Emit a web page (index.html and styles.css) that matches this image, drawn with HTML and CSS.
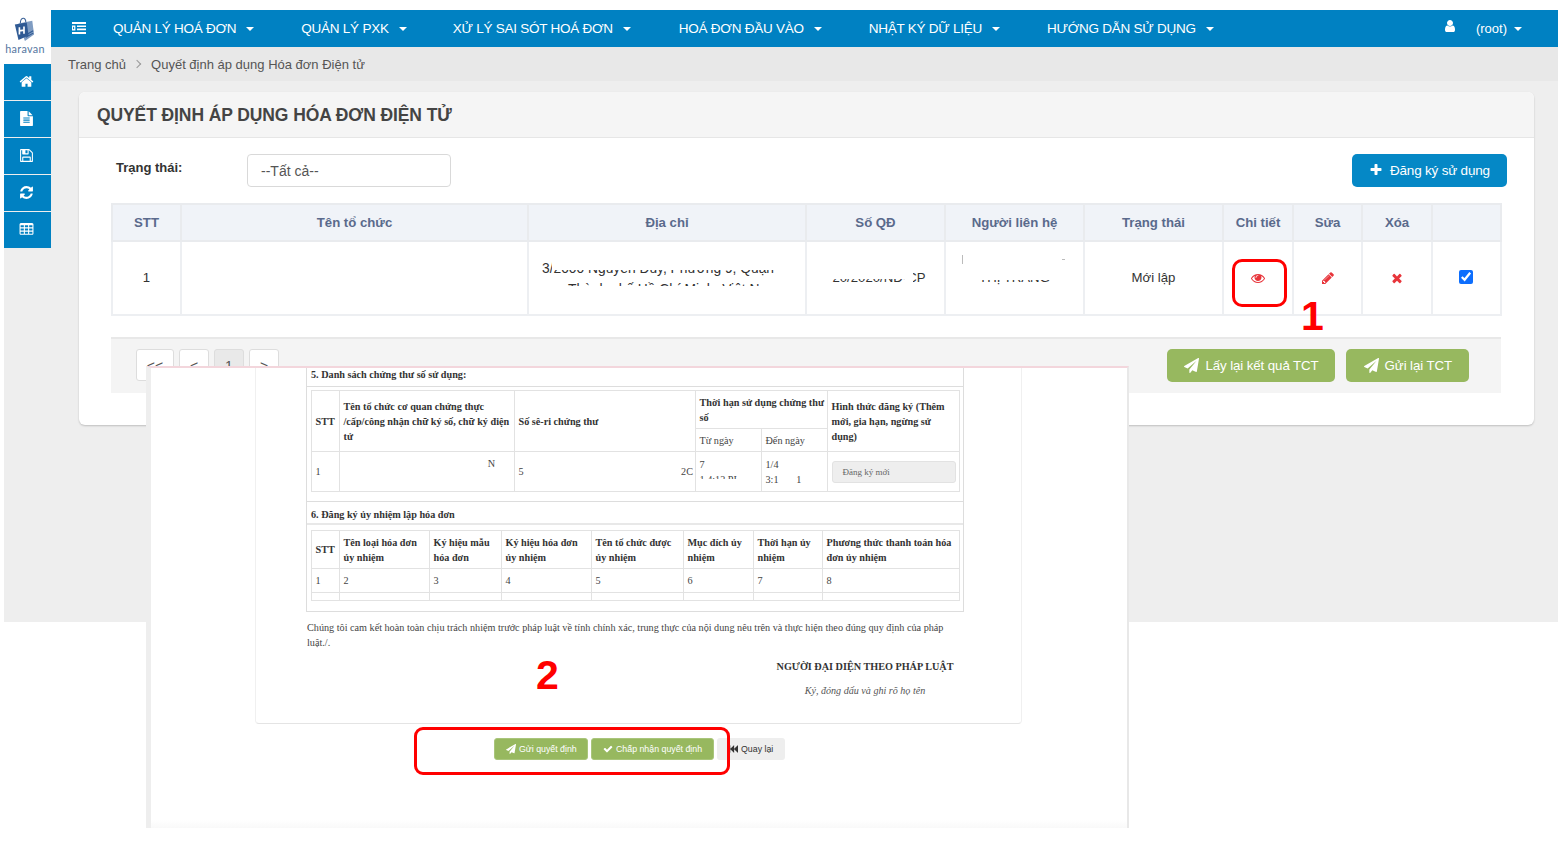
FILE: index.html
```html
<!DOCTYPE html>
<html lang="vi">
<head>
<meta charset="utf-8">
<title>Quyết định áp dụng Hóa đơn Điện tử</title>
<link rel="stylesheet" href="styles.css">
</head>
<body>
<svg class="sprite" xmlns="http://www.w3.org/2000/svg">
  <symbol id="i-home" viewBox="0 0 1792 1792"><path d="M1472 992v480q0 26-19 45t-45 19h-384v-384h-256v384h-384q-26 0-45-19t-19-45v-480q0-1 .5-3t.5-3l575-474 575 474q1 2 1 6zm223-69l-62 74q-8 9-21 11h-3q-13 0-21-7l-692-577-692 577q-12 8-24 7-13-2-21-11l-62-74q-8-10-7-23.5t11-21.5l719-599q32-26 76-26t76 26l244 204v-195q0-14 9-23t23-9h192q14 0 23 9t9 23v408l219 182q10 8 11 21.5t-7 23.5z"/></symbol>
  <symbol id="i-file" viewBox="0 0 1792 1792"><path d="M1596 476q14 14 28 36h-472v-472q22 14 36 28zm-476 164h544v1056q0 40-28 68t-68 28h-1344q-40 0-68-28t-28-68v-1600q0-40 28-68t68-28h800v544q0 40 28 68t68 28zm160 736v-64q0-14-9-23t-23-9h-704q-14 0-23 9t-9 23v64q0 14 9 23t23 9h704q14 0 23-9t9-23zm0-256v-64q0-14-9-23t-23-9h-704q-14 0-23 9t-9 23v64q0 14 9 23t23 9h704q14 0 23-9t9-23zm0-256v-64q0-14-9-23t-23-9h-704q-14 0-23 9t-9 23v64q0 14 9 23t23 9h704q14 0 23-9t9-23z"/></symbol>
  <symbol id="i-save" viewBox="0 0 1792 1792"><path d="M512 1536h768v-384h-768v384zm896 0h128v-896q0-14-10-38.5t-20-34.5l-281-281q-10-10-34-20t-39-10v416q0 40-28 68t-68 28h-576q-40 0-68-28t-28-68v-416h-128v1280h128v-416q0-40 28-68t68-28h832q40 0 68 28t28 68v416zm-384-928v-320q0-13-9.5-22.5t-22.5-9.5h-192q-13 0-22.5 9.5t-9.5 22.5v320q0 13 9.5 22.5t22.5 9.5h192q13 0 22.5-9.5t9.5-22.5zm640 32v928q0 40-28 68t-68 28h-1344q-40 0-68-28t-28-68v-1344q0-40 28-68t68-28h928q40 0 88 20t76 48l280 280q28 28 48 76t20 88z"/></symbol>
  <symbol id="i-refresh" viewBox="0 0 1792 1792"><path d="M1639 1056q0 5-1 7-64 268-268 434.5t-478 166.5q-146 0-282.5-55t-243.5-157l-129 129q-19 19-45 19t-45-19-19-45v-448q0-26 19-45t45-19h448q26 0 45 19t19 45-19 45l-137 137q71 66 161 102t187 36q134 0 250-65t186-179q11-17 53-117 8-23 30-23h192q13 0 22.5 9.5t9.5 22.5zm25-800v448q0 26-19 45t-45 19h-448q-26 0-45-19t-19-45 19-45l138-138q-148-137-349-137-134 0-250 65t-186 179q-11 17-53 117-8 23-30 23h-199q-13 0-22.5-9.5t-9.5-22.5v-7q65-268 270-434.5t480-166.5q146 0 284 55.5t245 156.5l130-129q19-19 45-19t45 19 19 45z"/></symbol>
  <symbol id="i-table" viewBox="0 0 1792 1792"><path d="M576 1376v-192q0-14-9-23t-23-9h-320q-14 0-23 9t-9 23v192q0 14 9 23t23 9h320q14 0 23-9t9-23zm0-384v-192q0-14-9-23t-23-9h-320q-14 0-23 9t-9 23v192q0 14 9 23t23 9h320q14 0 23-9t9-23zm512 384v-192q0-14-9-23t-23-9h-320q-14 0-23 9t-9 23v192q0 14 9 23t23 9h320q14 0 23-9t9-23zm-512-768v-192q0-14-9-23t-23-9h-320q-14 0-23 9t-9 23v192q0 14 9 23t23 9h320q14 0 23-9t9-23zm512 384v-192q0-14-9-23t-23-9h-320q-14 0-23 9t-9 23v192q0 14 9 23t23 9h320q14 0 23-9t9-23zm512 384v-192q0-14-9-23t-23-9h-320q-14 0-23 9t-9 23v192q0 14 9 23t23 9h320q14 0 23-9t9-23zm-512-768v-192q0-14-9-23t-23-9h-320q-14 0-23 9t-9 23v192q0 14 9 23t23 9h320q14 0 23-9t9-23zm512 384v-192q0-14-9-23t-23-9h-320q-14 0-23 9t-9 23v192q0 14 9 23t23 9h320q14 0 23-9t9-23zm0-384v-192q0-14-9-23t-23-9h-320q-14 0-23 9t-9 23v192q0 14 9 23t23 9h320q14 0 23-9t9-23zm128-320v1088q0 66-47 113t-113 47h-1344q-66 0-113-47t-47-113v-1088q0-66 47-113t113-47h1344q66 0 113 47t47 113z"/></symbol>
  <symbol id="i-plane" viewBox="0 0 1792 1792"><path d="M1764 11q33 24 27 64l-256 1536q-5 29-32 45-14 8-31 8-11 0-24-5l-453-185-242 295q-18 23-49 23-13 0-22-4-19-7-30.5-23.5t-11.5-36.5v-349l864-1059-1069 925-395-162q-37-14-40-55-2-40 32-59l1664-960q15-9 32-9 20 0 36 11z"/></symbol>
  <symbol id="i-plus" viewBox="0 0 1792 1792"><path d="M1600 736v192q0 40-28 68t-68 28h-416v416q0 40-28 68t-68 28h-192q-40 0-68-28t-28-68v-416h-416q-40 0-68-28t-28-68v-192q0-40 28-68t68-28h416v-416q0-40 28-68t68-28h192q40 0 68 28t28 68v416h416q40 0 68 28t28 68z"/></symbol>
  <symbol id="i-times" viewBox="0 0 1792 1792"><path d="M1490 1322q0 40-28 68l-136 136q-28 28-68 28t-68-28l-294-294-294 294q-28 28-68 28t-68-28l-136-136q-28-28-28-68t28-68l294-294-294-294q-28-28-28-68t28-68l136-136q28-28 68-28t68 28l294 294 294-294q28-28 68-28t68 28l136 136q28 28 28 68t-28 68l-294 294 294 294q28 28 28 68z"/></symbol>
  <symbol id="i-pencil" viewBox="0 0 1792 1792"><path d="M491 1536l91-91-235-235-91 91v107h128v128h107zm523-928q0-22-22-22-10 0-17 7l-542 542q-7 7-7 17 0 22 22 22 10 0 17-7l542-542q7-7 7-17zm-54-192l416 416-832 832h-416v-416zm683 96q0 53-37 90l-166 166-416-416 166-165q36-38 90-38 53 0 91 38l235 234q37 39 37 91z"/></symbol>
  <symbol id="i-eye" viewBox="0 0 1792 1792"><path d="M1664 960q-152-236-381-353 61 104 61 225 0 185-131.5 316.5t-316.5 131.5-316.5-131.5-131.5-316.5q0-121 61-225-229 117-381 353 133 205 333.5 326.5t434.5 121.5 434.5-121.5 333.5-326.5zm-720-384q0-20-14-34t-34-14q-125 0-214.5 89.5t-89.5 214.5q0 20 14 34t34 14 34-14 14-34q0-86 61-147t147-61q20 0 34-14t14-34zm848 384q0 34-20 69-140 230-376.5 368.5t-499.5 138.5-499.5-139-376.5-368q-20-35-20-69t20-69q140-229 376.5-368t499.5-139 499.5 139 376.5 368q20 35 20 69z"/></symbol>
  <symbol id="i-user" viewBox="0 0 1792 1792"><path d="M1536 1399q0 109-62.5 187t-150.5 78h-854q-88 0-150.5-78t-62.5-187q0-85 8.5-160.5t31.5-152 58.5-131 94-89 134.5-34.5q131 128 313 128t313-128q76 0 134.5 34.5t94 89 58.5 131 31.5 152 8.5 160.5zm-256-887q0 159-112.5 271.5t-271.5 112.5-271.5-112.5-112.5-271.5 112.5-271.5 271.5-112.5 271.5 112.5 112.5 271.5z"/></symbol>
  <symbol id="i-check" viewBox="0 0 1792 1792"><path d="M1671 566q0 40-28 68l-724 724-136 136q-28 28-68 28t-68-28l-136-136-362-362q-28-28-28-68t28-68l136-136q28-28 68-28t68 28l294 295 656-657q28-28 68-28t68 28l136 136q28 28 28 68z"/></symbol>
  <symbol id="i-back" viewBox="0 0 1792 1792"><path d="M1747 141q19-19 32-13t13 32v1472q0 26-13 32t-32-13l-710-710q-9-9-13-19v710q0 26-13 32t-32-13l-710-710q-9-9-13-19v678q0 26-19 45t-45 19h-128q-26 0-45-19t-19-45v-1408q0-26 19-45t45-19h128q26 0 45 19t19 45v678q4-10 13-19l710-710q19-19 32-13t13 32v710q4-10 13-19z"/></symbol>
  <symbol id="i-menu" viewBox="0 0 14 12"><path d="M0 0h14v2H0zM5 3.400h9v1.700H5zM5 6.600h9v1.700H5zM0 10h14v2H0zM0 3.400h3.400v5H0zM1 4.400v3l1.600-1.500z" fill-rule="evenodd"/></symbol>
</svg>

<div class="app">
  <aside class="side">
    <div class="logo">
      <svg class="logo-mark" viewBox="0 0 24 28"><path class="logo-line" d="M8 8c0-7 6-8 6-1"/><path class="logo-blue" d="M6 8l15-3 2 15-10 7z"/><path class="logo-dark" d="M2 9l13-2 2 14-11 5z"/><path class="logo-h" d="M7 12v8M12 11.300v8M7 16l5-.7"/><path class="logo-stripe" d="M15 20l7-4M14 23l8-4.500"/></svg>
      <span class="logo-text">haravan</span>
    </div>
    <a class="side-btn"><svg class="ico"><use href="#i-home"/></svg></a>
    <a class="side-btn"><svg class="ico"><use href="#i-file"/></svg></a>
    <a class="side-btn"><svg class="ico"><use href="#i-save"/></svg></a>
    <a class="side-btn"><svg class="ico"><use href="#i-refresh"/></svg></a>
    <a class="side-btn"><svg class="ico"><use href="#i-table"/></svg></a>
  </aside>

  <div class="main">
    <nav class="nav">
      <svg class="nav-toggle"><use href="#i-menu"/></svg>
      <a class="nav-item nav-w1">QUẢN LÝ HOÁ ĐƠN<i class="caret"></i></a>
      <a class="nav-item nav-w2">QUẢN LÝ PXK<i class="caret"></i></a>
      <a class="nav-item nav-w3">XỬ LÝ SAI SÓT HOÁ ĐƠN<i class="caret"></i></a>
      <a class="nav-item nav-w4">HOÁ ĐƠN ĐẦU VÀO<i class="caret"></i></a>
      <a class="nav-item nav-w5">NHẬT KÝ DỮ LIỆU<i class="caret"></i></a>
      <a class="nav-item">HƯỚNG DẪN SỬ DỤNG<i class="caret"></i></a>
      <div class="nav-user"><svg class="user-ico"><use href="#i-user"/></svg><span>(root)</span><i class="caret caret-user"></i></div>
    </nav>
    <div class="crumb"><span>Trang chủ</span><span class="crumb-sep"></span><span>Quyết định áp dụng Hóa đơn Điện tử</span></div>

    <section class="card">
      <h1 class="card-title">QUYẾT ĐỊNH ÁP DỤNG HÓA ĐƠN ĐIỆN TỬ</h1>
      <div class="card-body">
        <div class="filter">
          <label class="filter-label">Trạng thái:</label>
          <div class="select">--Tất cả--</div>
          <a class="btn-blue"><svg class="btn-ico"><use href="#i-plus"/></svg>Đăng ký sử dụng</a>
        </div>
        <table class="grid">
          <colgroup><col class="c1"><col class="c2"><col class="c3"><col class="c4"><col class="c5"><col class="c6"><col class="c7"><col class="c8"><col class="c9"><col class="c10"></colgroup>
          <thead><tr><th>STT</th><th>Tên tổ chức</th><th>Địa chỉ</th><th>Số QĐ</th><th>Người liên hệ</th><th>Trạng thái</th><th>Chi tiết</th><th>Sửa</th><th>Xóa</th><th></th></tr></thead>
          <tbody><tr>
            <td>1</td><td></td>
            <td class="cell-addr"><div class="addr"><span class="addr-l1">3/2000 Nguyễn Duy, Phường 9, Quận</span><span class="addr-l2">Thành phố Hồ Chí Minh, Việt Nam</span></div><i class="mask m-a1"></i><i class="mask m-a2"></i></td>
            <td class="cell-num">20/2020/NĐ-CP<i class="mask m-q1"></i><i class="mask m-q2"></i></td>
            <td>THỊ TRANG<i class="mask m-p1"></i><i class="mask m-p2"></i><i class="tick tick-a"></i><i class="tick tick-b"></i></td>
            <td>Mới lập</td>
            <td><svg class="act act-eye"><use href="#i-eye"/></svg></td>
            <td><svg class="act"><use href="#i-pencil"/></svg></td>
            <td><svg class="act"><use href="#i-times"/></svg></td>
            <td class="cell-chk"><input class="chk" type="checkbox" checked></td>
          </tr></tbody>
        </table>
        <div class="pager-bar">
          <a class="pg pg-wide">&lt;&lt;</a><a class="pg">&lt;</a><a class="pg pg-on">1</a><a class="pg">&gt;</a>
          <a class="btn-green btn-first"><svg class="btn-ico2"><use href="#i-plane"/></svg>Lấy lại kết quả TCT</a>
          <a class="btn-green btn-second"><svg class="btn-ico2"><use href="#i-plane"/></svg>Gửi lại TCT</a>
        </div>
      </div>
    </section>
  </div>
</div>

<div class="shot">
  <div class="doc">
    <div class="doc-section">
      <h3 class="h5">5. Danh sách chứng thư số sử dụng:</h3>
      <div class="t-wrap">
        <table class="dt dt1">
          <colgroup><col class="d1"><col class="d2"><col class="d3"><col class="d4"><col class="d5"><col class="d6"></colgroup>
          <tr class="r-a"><th rowspan="2">STT</th><th rowspan="2">Tên tổ chức cơ quan chứng thực<br>/cấp/công nhận chữ ký số, chữ ký điện<br>tử</th><th rowspan="2">Số sê-ri chứng thư</th><th class="th-nw" colspan="2">Thời hạn sử dụng chứng thư<br>số</th><th rowspan="2">Hình thức đăng ký (Thêm mới, gia hạn, ngừng sử dụng)</th></tr>
          <tr class="r-b"><td>Từ ngày</td><td>Đến ngày</td></tr>
          <tr class="r-c"><td>1</td><td class="right-n">N</td><td class="serial"><span>5</span><span>2C</span></td><td class="cell-clip">7<br>1 4:12 PI<i class="mask m-d1"></i></td><td>1/4<br>3:1 &nbsp; &nbsp; &nbsp; 1</td><td><span class="reg">Đăng ký mới</span></td></tr>
        </table>
      </div>
      <h3 class="h6">6. Đăng ký ủy nhiệm lập hóa đơn</h3>
      <div class="t-wrap t-last">
        <table class="dt dt2">
          <colgroup><col class="e1"><col class="e2"><col class="e3"><col class="e4"><col class="e5"><col class="e6"><col class="e7"><col class="e8"></colgroup>
          <tr class="r-d"><th>STT</th><th>Tên loại hóa đơn ủy nhiệm</th><th>Ký hiệu mẫu hóa đơn</th><th>Ký hiệu hóa đơn ủy nhiệm</th><th>Tên tổ chức được ủy nhiệm</th><th>Mục đích ủy nhiệm</th><th>Thời hạn ủy nhiệm</th><th>Phương thức thanh toán hóa đơn ủy nhiệm</th></tr>
          <tr class="r-e"><td>1</td><td>2</td><td>3</td><td>4</td><td>5</td><td>6</td><td>7</td><td>8</td></tr>
          <tr class="r-f"><td></td><td></td><td></td><td></td><td></td><td></td><td></td><td></td></tr>
        </table>
      </div>
    </div>
    <p class="pledge">Chúng tôi cam kết hoàn toàn chịu trách nhiệm trước pháp luật về tính chính xác, trung thực của nội dung nêu trên và thực hiện theo đúng quy định của pháp luật./.</p>
    <div class="sign"><strong>NGƯỜI ĐẠI DIỆN THEO PHÁP LUẬT</strong><em>Ký, đóng dấu và ghi rõ họ tên</em></div>
  </div>
  <div class="doc-actions">
    <a class="mini mini-green mini-a"><svg class="mini-ico"><use href="#i-plane"/></svg>Gửi quyết định</a>
    <a class="mini mini-green mini-b"><svg class="mini-ico"><use href="#i-check"/></svg>Chấp nhận quyết định</a>
    <a class="mini mini-gray"><svg class="mini-ico mini-ico-back"><use href="#i-back"/></svg>Quay lại</a>
  </div>
</div>

<div class="mark mark-eye"></div>
<div class="mark mark-actions"></div>
<span class="num num-1">1</span>
<span class="num num-2">2</span>
</body>
</html>
```

FILE: styles.css
```css
* { box-sizing: border-box; }
html, body { margin: 0; padding: 0; }
body { position: relative; height: 847px; overflow: hidden; background: #fff; font-family: "Liberation Sans", Arial, sans-serif; color: #333; }
a { color: inherit; text-decoration: none; }
.sprite { position: absolute; width: 0; height: 0; }

.app { display: flex; margin: 10px 10px 0 4px; height: 612px; background: #eee; }

.side { width: 47px; flex: none; display: flex; flex-direction: column; background: #eee; }
.logo { height: 54px; width: 51px; margin-left: -4px; background: #fff; display: flex; flex-direction: column; align-items: center; padding-top: 6px; }
.logo-mark { width: 22px; height: 26px; margin-left: -4px; }
.logo-blue { fill: #7f9cc2; }
.logo-dark { fill: #2f5a94; }
.logo-line { fill: none; stroke: #3d6398; stroke-width: 1.2; }
.logo-h { fill: none; stroke: #fff; stroke-width: 1.8; }
.logo-stripe { fill: none; stroke: #2f5a94; stroke-width: 1.2; }
.logo-text { font-family: "Lato", sans-serif; font-size: 10.800px; line-height: 13px; letter-spacing: .3px; color: #55779f; margin-left: -1px; }
.side-btn { height: 36px; margin-bottom: 1px; padding: 0 2px 2px 0; background: #0081c2; display: flex; align-items: center; justify-content: center; }
.ico { width: 15px; height: 15px; fill: #fff; }

.main { flex: 1; min-width: 0; display: flex; flex-direction: column; }
.nav { height: 37px; background: #0081c2; color: #fff; display: flex; align-items: center; font-size: 13.500px; padding: 0 0 1px 21px; }
.nav-toggle { width: 14px; height: 12px; fill: #fff; margin: 0 27px 0 0; flex: none; }
.nav-item { display: flex; align-items: center; white-space: nowrap; letter-spacing: -.25px; }
.nav-w1 { margin-right: 47px; }
.nav-w2 { margin-right: 46px; }
.nav-w3 { margin-right: 48px; }
.nav-w4 { margin-right: 47px; }
.nav-w5 { margin-right: 47px; }
.caret { display: inline-block; width: 0; height: 0; margin: 2px 0 0 10px; border-left: 4.500px solid transparent; border-right: 4.500px solid transparent; border-top: 4.500px solid #fff; }
.caret-user { margin-left: 7px; }
.nav-user { margin-left: auto; padding-right: 36px; display: flex; align-items: center; font-size: 13px; }
.user-ico { width: 14px; height: 14px; fill: #fff; margin: -4px 19px 0 0; }

.crumb { height: 34px; background: #e8e8e8; display: flex; align-items: center; padding-left: 17px; font-size: 13px; color: #555; }
.crumb-sep { width: 6px; height: 6px; border-top: 1px solid #999; border-right: 1px solid #999; transform: rotate(45deg); margin: 0 11px 0 8px; }

.card { margin: 11px 24px 0 28px; height: 333px; background: #fff; border-radius: 6px; box-shadow: 0 1px 2px rgba(0,0,0,.2); overflow: hidden; }
.card-title { margin: 0; height: 46px; padding-left: 18px; background: #f5f5f5; border-bottom: 1px solid #e6e6e6; font-size: 17.500px; line-height: 46px; font-weight: 700; color: #444; letter-spacing: -.1px; }
.card-body { padding: 16px 33px 0 32px; }
.filter { display: flex; align-items: flex-start; height: 33px; margin-bottom: 16px; }
.filter-label { width: 136px; padding-left: 5px; font-size: 13px; font-weight: 700; color: #333; line-height: 27px; }
.select { width: 204px; height: 33px; padding-left: 13px; border: 1px solid #d9d9d9; border-radius: 4px; font-size: 14px; line-height: 32px; color: #555; }
.btn-blue { margin-left: auto; margin-right: -6px; width: 155px; height: 33px; background: #0588c6; border-radius: 5px; color: #fff; font-size: 13.500px; display: flex; align-items: center; padding-left: 17px; white-space: nowrap; letter-spacing: -.2px; }
.btn-ico { width: 14px; height: 14px; fill: #fff; margin: -2px 7px 0 0; }

.grid { width: 1389px; table-layout: fixed; border-collapse: collapse; border: 2px solid #e9ebee; font-size: 13.200px; }
.c1 { width: 69px; } .c2 { width: 347px; } .c3 { width: 278px; } .c4 { width: 139px; } .c5 { width: 139px; }
.c6 { width: 139px; } .c7 { width: 70px; } .c8 { width: 69px; } .c9 { width: 70px; } .c10 { width: 69px; }
.grid th { height: 37px; background: #f0f3f8; color: #5a6a8c; font-weight: 700; border: 2px solid #e9ebee; padding: 0; }
.grid td { height: 74px; text-align: center; border: 2px solid #edeff2; padding: 0 0 2px; color: #333; position: relative; }
.grid .cell-addr { vertical-align: top; text-align: left; padding: 0; }
.grid .cell-num { padding-left: 7px; }
.grid .cell-chk { padding-right: 2px; }
.addr { padding: 18px 0 0 13px; font-size: 13.800px; line-height: 17px; white-space: nowrap; }
.addr-l1, .addr-l2 { display: block; }
.addr-l2 { padding: 4px 0 0 26px; }
.mask { position: absolute; background: #fff; display: block; }
.m-a1 { left: 23px; right: 4px; top: 8px; height: 20px; }
.m-a2 { left: 4px; right: 4px; top: 44px; height: 27px; }
.m-q1 { left: 4px; width: 100px; top: 22px; height: 15px; }
.m-q2 { left: 98px; width: 8px; top: 22px; height: 26px; }
.m-p1 { left: 4px; right: 4px; top: 18px; height: 20px; }
.m-p2 { left: 4px; right: 4px; top: 44px; height: 20px; }
.tick { position: absolute; display: block; background: #bbb; }
.tick-a { left: 16px; top: 13px; width: 1px; height: 9px; }
.tick-b { left: 116px; top: 17px; width: 3px; height: 1px; }
.act { width: 14px; height: 14px; fill: #e8353b; vertical-align: middle; }
.chk { width: 14px; height: 14px; margin: -3px 0 0; accent-color: #0d6efd; vertical-align: middle; }

.pager-bar { width: 1390px; height: 56px; margin-top: 21px; background: #f4f4f4; border-top: 2px solid #e8e8e8; display: flex; align-items: flex-start; padding: 10px 32px 0 25px; }
.pg { width: 30px; height: 32px; margin-right: 5px; border: 1px solid #ddd; border-radius: 3px; background: #fff; text-align: center; font-size: 14px; line-height: 32px; color: #555; }
.pg-wide { width: 38px; }
.pg-on { background: #e9e9e9; }
.btn-green { height: 33px; background: #97b85f; border-radius: 5px; color: #fff; font-size: 13.300px; display: flex; align-items: center; padding: 0 17px; white-space: nowrap; letter-spacing: -.1px; margin-left: 11px; }
.btn-first { margin-left: auto; padding-right: 16px; }
.btn-second { padding: 0 17px 0 18px; }
.btn-ico2 { width: 15px; height: 15px; fill: #fff; margin-right: 6px; }

.shot { position: absolute; left: 146px; top: 366px; width: 983px; height: 462px; background: linear-gradient(#fff 452px, #f9f9f9); border-top: 2px solid #f3d6dc; border-left: 5px solid #eee; border-right: 2px solid #e8e8e8; padding-left: 104px; overflow: hidden; }
.doc { width: 767px; height: 356px; border-left: 1px solid #f0f0f0; border-right: 1px solid #f0f0f0; border-bottom: 1px solid #e4e4e4; border-radius: 0 0 4px 4px; font-family: "Liberation Serif", "Times New Roman", serif; font-size: 10px; color: #444; padding-left: 50px; }
.doc-section { width: 658px; height: 244px; border: 1px solid #ddd; border-top: 0; }
.h5 { margin: 0; height: 19px; font-size: 10.200px; line-height: 14px; padding-left: 4px; color: #333; border-bottom: 1px solid #ddd; }
.t-wrap { padding: 3px 4px 0 4px; height: 115px; border-bottom: 1px solid #ddd; }
.t-last { height: 86px; border-bottom: 0; padding-top: 5px; }
.h6 { margin: 0; height: 23px; font-size: 10.200px; line-height: 25px; padding-left: 4px; color: #333; border-bottom: 2px solid #e8e8e8; }
.dt { width: 648px; table-layout: fixed; border-collapse: collapse; border: 1px solid #ddd; }
.dt th, .dt td { border: 1px solid #e2e2e2; padding: 0 4px 0 3.500px; text-align: left; line-height: 15px; font-size: 10.200px; }
.dt th { color: #333; font-weight: 700; }
.dt .th-nw { white-space: nowrap; padding-right: 0; }
.d1 { width: 28px; } .d2 { width: 175px; } .d3 { width: 181px; } .d4 { width: 66px; } .d5 { width: 66px; } .d6 { width: 132px; }
.r-a { height: 38px; } .r-b { height: 23px; } .r-c { height: 40px; }
.dt .right-n { text-align: right; vertical-align: top; padding: 4px 19px 0 4px; }
.serial span:first-child { float: left; }
.serial span:last-child { float: right; margin-right: -2px; }
.cell-clip { position: relative; }
.m-d1 { left: 1px; right: 1px; top: 27px; height: 12px; }
.reg { display: block; height: 22px; line-height: 20px; padding-left: 10px; margin-right: -1px; background: #eee; border: 1px solid #e2e2e2; border-radius: 3px; font-size: 9px; color: #666; }
.e1 { width: 28px; } .e2 { width: 90px; } .e3 { width: 72px; } .e4 { width: 90px; } .e5 { width: 92px; } .e6 { width: 70px; } .e7 { width: 69px; } .e8 { width: 137px; }
.r-d { height: 38px; } .r-e { height: 24px; } .r-f { height: 8px; }
.pledge { margin: 8px 0 0 1px; width: 645px; font-size: 10.200px; line-height: 15px; color: #444; }
.sign { display: flex; flex-direction: column; align-items: center; width: 178px; margin: 11px 0 0 470px; gap: 12px; }
.sign strong { white-space: nowrap; font-size: 10.200px; line-height: 12px; color: #333; }
.sign em { white-space: nowrap; font-size: 10.100px; line-height: 12px; color: #555; }

.doc-actions { display: flex; gap: 3px; margin: 14px 0 0 239px; }
.mini { height: 22px; border-radius: 3px; font-size: 8.800px; display: flex; align-items: center; white-space: nowrap; }
.mini-green { background: #97b85f; color: #fff; border: 1px solid #a9c57b; fill: #fff; }
.mini-a { width: 94px; padding-left: 11px; }
.mini-b { width: 123px; padding-left: 11px; }
.mini-gray { width: 68px; background: #eee; color: #333; padding-left: 12px; fill: #333; }
.mini-ico { width: 10px; height: 10px; margin-right: 3px; }
.mini-ico-back { width: 9px; margin-right: 3px; }

.mark { position: absolute; border: 3px solid #f00; background: transparent; }
.mark-eye { left: 1232px; top: 259px; width: 55px; height: 48px; border-radius: 10px; }
.mark-actions { left: 414px; top: 727px; width: 316px; height: 48px; border-radius: 9px; }
.num { position: absolute; font-weight: 700; color: #f00; font-size: 41px; line-height: 40px; }
.num-1 { left: 1301px; top: 296px; }
.num-2 { left: 536px; top: 655px; }
```
